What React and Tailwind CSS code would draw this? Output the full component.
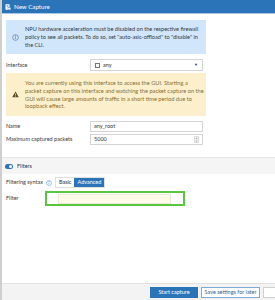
import React from 'react';

const font = { fontFamily: 'Lato, "Noto Sans", sans-serif' };

const InfoIcon = ({ className }) => (
  <svg viewBox="0 0 16 16" className={className} fill="none" stroke="currentColor" strokeWidth="1.4">
    <circle cx="8" cy="8" r="6.5" />
    <line x1="8" y1="7" x2="8" y2="11.5" />
    <circle cx="8" cy="4.8" r="0.6" fill="currentColor" />
  </svg>
);

const WarnIcon = () => (
  <svg viewBox="0 0 16 16" className="w-[7px] h-[7px]">
    <path d="M8 1 L15.5 14.5 H0.5 Z" fill="#5c4a1e" />
    <rect x="7.2" y="5.5" width="1.6" height="5" fill="#fcf0cc" />
    <rect x="7.2" y="11.5" width="1.6" height="1.6" fill="#fcf0cc" />
  </svg>
);

const FormRow = ({ label, children, className = '' }) => (
  <div className={`flex items-center w-[197px] ${className}`}>
    <div className="w-[84px] shrink-0 text-[5.5px] text-[#3a3a3a]">{label}</div>
    {children}
  </div>
);

export default function App() {
  return (
    <div style={font} className="w-[275px] h-[300px] flex flex-col bg-white border-l-2 border-[#cfcfcf] overflow-hidden">
      {/* Header */}
      <div className="h-[13px] bg-[#2c74b8] flex items-center pl-[3px] gap-[3px] shrink-0">
        <svg viewBox="0 0 12 12" className="w-[6px] h-[6px] shrink-0">
          <rect x="1" y="0.5" width="8" height="11" fill="#fff" />
          <rect x="3" y="3" width="4" height="1" fill="#2c74b8" />
          <rect x="3" y="5" width="4" height="1" fill="#2c74b8" />
          <rect x="6" y="7" width="5.5" height="4.5" fill="#fff" stroke="#2c74b8" strokeWidth="0.8" />
        </svg>
        <span className="text-white text-[6.2px]">New Capture</span>
      </div>
      <div className="h-[1px] bg-[#a9c8e6] shrink-0" />

      <div className="pl-[4px] shrink-0">
        {/* NPU info */}
        <div className="mt-[6px] w-[200px] h-[34px] bg-[#d1e6fa] flex items-center">
          <div className="w-[19px] shrink-0 flex justify-center text-[#4a6f94]">
            <InfoIcon className="w-[7px] h-[7px]" />
          </div>
          <p className="text-[5.6px] leading-[8px] text-[#2f3a45] pr-[4px]">
            NPU hardware acceleration must be disabled on the respective firewall policy to see all packets. To do so, set "auto-asic-offload" to "disable" in the CLI.
          </p>
        </div>

        <FormRow label="Interface" className="mt-[5px]">
          <div className="h-[12px] w-[113px] border border-[#d4d4d4] bg-white flex items-center px-[4px]">
            <span className="shrink-0 w-[5px] h-[5px] border border-[#777] mr-[3px]" />
            <span className="text-[5.5px] text-[#333] flex-1">any</span>
            <span className="text-[4px] text-[#333]">▼</span>
          </div>
        </FormRow>

        {/* Warning */}
        <div className="mt-[2px] w-[200px] h-[43px] bg-[#fcf0cc] flex items-center">
          <div className="w-[19px] shrink-0 flex justify-center">
            <WarnIcon />
          </div>
          <p className="text-[5.7px] leading-[7.7px] text-[#8a6d2b] whitespace-nowrap">
            You are currently using this interface to access the GUI. Starting a<br />
            packet capture on this interface and watching the packet capture on the<br />
            GUI will cause large amounts of traffic in a short time period due to<br />
            loopback effect.
          </p>
        </div>

        <FormRow label="Name" className="mt-[5px]">
          <div className="h-[11px] w-[113px] border border-[#d4d4d4] bg-white flex items-center px-[3px] text-[5.5px] text-[#333]">
            any_root
          </div>
        </FormRow>
        <FormRow label="Maximum captured packets" className="mt-[2px]">
          <div className="h-[11px] w-[113px] border border-[#d4d4d4] bg-white flex items-center px-[3px] text-[5.5px] text-[#333]">
            <span className="flex-1">5000</span>
            <span className="flex flex-col items-center justify-center w-[5px] h-[7px] border border-[#ddd] bg-[#f4f4f4] text-[2.5px] leading-[3px] text-[#888]">
              <span>▲</span>
              <span>▼</span>
            </span>
          </div>
        </FormRow>
      </div>

      {/* Filters band */}
      <div className="mt-[12px] h-[17px] bg-[#f5f5f5] border-t border-[#e6e6e6] flex items-center pl-[3px] gap-[4px] shrink-0">
        <span className="w-[8px] h-[5px] rounded-full bg-[#2c74b8] flex items-center justify-end pr-[1px]">
          <span className="w-[3px] h-[3px] rounded-full bg-white" />
        </span>
        <span className="text-[5.5px] text-[#333]">Filters</span>
      </div>

      <div className="pl-[4px] shrink-0">
        <div className="mt-[3px] h-[11px] flex items-center">
          <span className="text-[5.5px] text-[#3a3a3a]">Filtering syntax</span>
          <InfoIcon className="w-[6px] h-[6px] ml-[3px] text-[#4a90d0]" />
          <div className="ml-[3px] flex h-[11px] border border-[#e0e0e0]">
            <span className="px-[3px] flex items-center text-[5.5px] text-[#333] bg-white">Basic</span>
            <span className="px-[3px] flex items-center text-[5.5px] text-white bg-[#2c74b8]">Advanced</span>
          </div>
        </div>
        <div className="mt-[3px] h-[15px] flex items-center">
          <span className="w-[39px] shrink-0 text-[5.5px] text-[#3a3a3a]">Filter</span>
          <div className="w-[140px] h-[15px] border-2 border-[#5cc43e] flex items-center pl-[11px]">
            <div className="w-[113px] h-[10px] bg-[#fffdea] border border-[#ebebd8]" />
          </div>
        </div>
      </div>

      <div className="flex-1" />

      {/* Footer */}
      <div className="h-[17px] bg-[#f3f3f3] border-t border-[#e2e2e2] flex items-center pl-[148px] gap-[3px] shrink-0">
        <button className="shrink-0 w-[48px] h-[11px] bg-[#2c74b8] text-white text-[5.5px] flex items-center justify-center">
          Start capture
        </button>
        <button className="shrink-0 w-[59px] h-[11px] bg-white border border-[#7fa9d6] text-[#2c5f95] text-[5.5px] flex items-center justify-center">
          Save settings for later
        </button>
        <button className="shrink-0 w-[40px] h-[11px] bg-white border border-[#cfcfcf]" />
      </div>
    </div>
  );
}
